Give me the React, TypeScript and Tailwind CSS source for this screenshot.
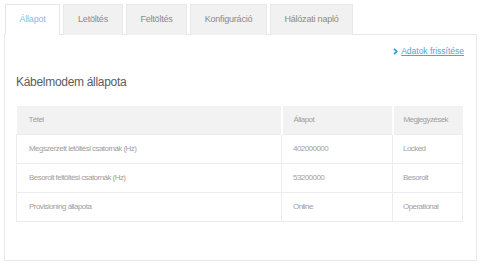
const tabs = [
  { label: 'Állapot', w: 'w-[55px]', active: true },
  { label: 'Letöltés', w: 'w-[60px]' },
  { label: 'Feltöltés', w: 'w-[61px]' },
  { label: 'Konfiguráció', w: 'w-[77px]' },
  { label: 'Hálózati napló', w: 'w-[83px]' },
];

const rows = [
  ['Megszerzett letöltési csatornák (Hz)', '402000000', 'Locked'],
  ['Besorolt feltöltési csatornák (Hz)', '53200000', 'Besorolt'],
  ['Provisioning állapota', 'Online', 'Operational'],
];

export default function App() {
  return (
    <div className="w-[480px] h-[267px] bg-white font-['Liberation_Sans',sans-serif] overflow-hidden">
      {/* Tabs */}
      <div className="flex gap-[3px] pt-[4px] pl-[5px] relative z-10">
        {tabs.map((t) => (
          <div
            key={t.label}
            className={`${t.w} h-[31px] flex items-center justify-center text-[9px] tracking-[-0.2px] border border-b-0 ${
              t.active
                ? 'bg-white border-[#e6e6e6] text-[#8dbbe0]'
                : 'bg-[#f1f1f1] border-[#e8e8e8] text-[#8a8a8a] h-[30px]'
            }`}
          >
            {t.label}
          </div>
        ))}
      </div>

      {/* Panel */}
      <div className="ml-[4px] w-[473px] h-[227px] -mt-px border border-[#e8e8e8] pl-[11px] pr-[12px] pt-[10px]">
        <div className="flex justify-end items-center gap-[3px] text-[8.5px]">
          <svg width="5" height="7" viewBox="0 0 5 7" className="mt-px">
            <path d="M1 0.8 L3.8 3.5 L1 6.2" stroke="#1e9ad6" strokeWidth="1.6" fill="none" />
          </svg>
          <span className="text-[#46a8de] underline underline-offset-1">Adatok frissítése</span>
        </div>

        <div className="mt-[15px] text-[12px] text-[#5c5c5c] tracking-[-0.3px]">Kábelmodem állapota</div>

        <table className="mt-[15px] w-[447px] border-collapse text-[8px] text-[#a0a0a0] tracking-[-0.55px]">
          <thead>
            <tr className="bg-[#f2f2f2] h-[29px]">
              <th className="text-left font-normal pl-[12px] w-[265px] border-r-2 border-white">Tétel</th>
              <th className="text-left font-normal pl-[11px] w-[111px] border-r-2 border-white">Állapot</th>
              <th className="text-left font-normal pl-[10px]">Megjegyzések</th>
            </tr>
          </thead>
          <tbody>
            {rows.map((r) => (
              <tr key={r[0]} className="h-[29px]">
                {r.map((c, i) => (
                  <td key={i} className={`border border-[#ececec] ${i === 0 ? 'pl-[12px]' : i === 1 ? 'pl-[11px]' : 'pl-[10px]'}`}>
                    {c}
                  </td>
                ))}
              </tr>
            ))}
          </tbody>
        </table>
      </div>
    </div>
  );
}
